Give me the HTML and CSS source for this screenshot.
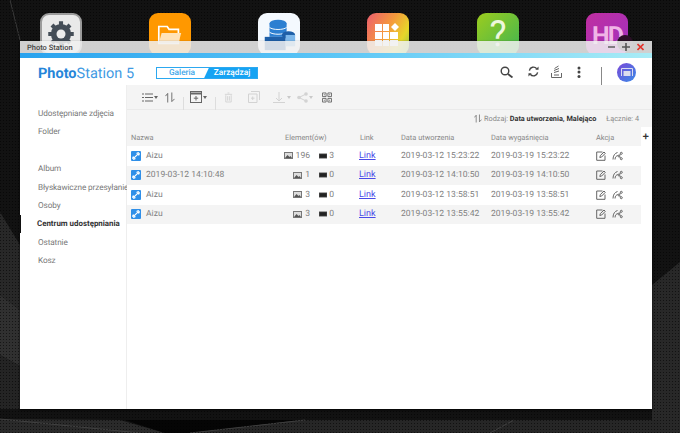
FILE: index.html
```html
<!DOCTYPE html>
<html lang="pl">
<head>
<meta charset="utf-8">
<title>Photo Station</title>
<link rel="stylesheet" href="styles.css">
</head>
<body>
<svg width="0" height="0" class="defs">
  <defs>
    <symbol id="i-link" viewBox="0 0 10 10"><rect width="10" height="10" rx="1" fill="#2f8fe8"/><path d="M2.800 7.200 7.200 2.800M2.500 5.500 1.700 7.200 2.800 8.300 4.500 7.500M5.500 2.500 7.200 1.700 8.300 2.800 7.500 4.500" stroke="#fff" stroke-width="1.200" fill="none"/></symbol>
    <symbol id="i-photo" viewBox="0 0 9 7"><rect width="9" height="7" fill="#777"/><rect x="1" y="1" width="7" height="5" fill="#ddd"/><path d="M1 6 3.500 3 5.500 5 6.500 4 8 6Z" fill="#555"/></symbol>
    <symbol id="i-film" viewBox="0 0 10 6"><rect width="10" height="6" fill="#444"/><rect x="1" y="1" width="8" height="4" fill="#222"/></symbol>
    <symbol id="i-edit" viewBox="0 0 10 10"><path d="M6.500 1H.7V9.300H9V4.500M3.800 6.500 4.300 4.600 8 1 9.300 2.300 5.700 6Z" fill="none" stroke="#666" stroke-width="1"/></symbol>
    <symbol id="i-share" viewBox="0 0 11 10"><g fill="none" stroke="#666" stroke-width="1"><path d="M1 8.500C1 4.500 3 2.200 5.500 1.500M3 8.500C3 6 4.500 4.800 5.800 4.500"/><circle cx="9.300" cy="2.300" r="1"/><circle cx="7" cy="5" r="1"/><circle cx="9.300" cy="7.700" r="1"/><path d="M8.500 3 7.600 4.200M7.600 5.800 8.500 7"/></g></symbol>
  </defs>
</svg>
<main class="desktop">
  <svg class="wallpaper" viewBox="0 0 680 433" width="680" height="433">
    <defs>
      <pattern id="dots" width="3" height="3" patternUnits="userSpaceOnUse"><rect width="1" height="1" fill="#000" opacity=".55"/></pattern>
    </defs>
    <rect width="680" height="433" fill="#121212"/>
    <path d="M0 212 20 245V310L0 295Z" fill="#282828"/>
    <path d="M0 295 20 310V366L0 355Z" fill="#303030"/>
    <path d="M0 355 20 366V409H0Z" fill="#242424"/>
    <path d="M652 285 680 262V433H652Z" fill="#282828"/>
    <path d="M0 419 120 420 165 433H0Z" fill="#2a2a2a"/>
    <path d="M125 420H300L190 433H165Z" fill="#050505"/>
    <path d="M300 420H660V433H190Z" fill="#262626"/>
    <path d="M0 419 140 433M190 433 305 420M490 433 514 420M10 0 20 40" stroke="#4a4a4a" stroke-width=".7" fill="none"/>
    <rect width="680" height="433" fill="url(#dots)"/>
  </svg>

  <div class="app-icon icon-gear"><svg viewBox="0 0 40 40" width="30" height="30"><circle cx="20" cy="20" r="10" fill="none" stroke="#444d57" stroke-width="7"/><path d="M20 3V37M3 20H37M8 8 32 32M32 8 8 32" stroke="#444d57" stroke-width="5.500"/><circle cx="20" cy="20" r="6" fill="#ededed"/></svg></div>
  <div class="app-icon icon-folder"><svg viewBox="0 0 30 30" width="28" height="28"><path d="M3 7H12L14 10H24V25H3Z" fill="none" stroke="#fff" stroke-width="1.800"/><path d="M6 14H27L24 25H3Z" fill="#ffe3b8"/></svg></div>
  <div class="app-icon icon-storage"><svg viewBox="0 0 40 40" width="38" height="38"><ellipse cx="19" cy="9" rx="9" ry="4" fill="#2c7fd1"/><rect x="10" y="9" width="18" height="14" fill="#2c7fd1"/><path d="M10 13C13 16 25 16 28 13M10 18C13 21 25 21 28 18" stroke="#fff" fill="none"/><ellipse cx="30" cy="21" rx="7" ry="4" fill="#1e5fa8"/><rect x="5" y="23" width="22" height="14" fill="#1e5fa8"/><rect x="27" y="21" width="10" height="12" fill="#7db7ea"/></svg></div>
  <div class="app-icon icon-apps"><svg viewBox="0 0 28 28" width="28" height="28"><g fill="#fff"><rect x="1" y="4" width="7" height="7"/><rect x="9" y="4" width="6" height="7"/><path d="M21 3 25 7 21 11 17 7Z"/><rect x="1" y="12" width="7" height="7"/><rect x="9" y="12" width="6" height="7"/><rect x="16" y="12" width="8" height="7"/><rect x="1" y="20" width="7" height="6"/><rect x="9" y="20" width="6" height="6"/><rect x="16" y="20" width="8" height="6"/></g></svg></div>
  <div class="app-icon icon-help"><span class="qmark">?</span></div>
  <div class="app-icon icon-hd"><span class="hd">HD</span></div>
  <div class="hd-badge"></div>

  <section class="window">
    <header class="titlebar">
      <span class="title">Photo Station</span>
      <div class="winbtns">
        <svg width="7" height="8" viewBox="0 0 7 8"><path d="M0 4H7" stroke="#666" stroke-width="1.600"/></svg>
        <svg width="8" height="8" viewBox="0 0 8 8"><path d="M0 4H8M4 0V8" stroke="#555" stroke-width="1.600"/></svg>
        <svg width="7" height="8" viewBox="0 0 7 8"><path d="M.5 1 6.500 7M6.500 1 .5 7" stroke="#e2332b" stroke-width="1.600"/></svg>
      </div>
    </header>
    <div class="accent"></div>
    <div class="appbar">
      <div class="brand"><b>Photo</b>Station 5</div>
      <div class="mode"><span class="mode-off">Galeria</span><span class="mode-on">Zarządzaj</span></div>
      <div class="appbar-tools">
        <svg class="tool t-search" width="13" height="12" viewBox="0 0 13 12"><circle cx="5" cy="5" r="3.800" fill="none" stroke="#444" stroke-width="1.400"/><path d="M8 8 12.500 11.500" stroke="#444" stroke-width="1.800"/></svg>
        <svg class="tool t-refresh" width="11" height="11" viewBox="0 0 12 12"><path d="M1.500 5A4.500 4.500 0 0 1 9.500 3M10.500 7A4.500 4.500 0 0 1 2.500 9" fill="none" stroke="#444" stroke-width="1.500"/><path d="M8 4H11.500V.5ZM4 8H.5V11.500Z" fill="#444"/></svg>
        <svg class="tool t-stack" width="11" height="13" viewBox="0 0 11 13"><path d="M.5 8V12.500H10.500V8M3 10H8M3 7.500 8 6M3 5.500 8 3.500M3.500 3.500 7.500 1" fill="none" stroke="#666"/></svg>
        <svg class="tool t-dots" width="4" height="12" viewBox="0 0 4 12"><circle cx="2" cy="2" r="1.500" fill="#444"/><circle cx="2" cy="6" r="1.500" fill="#444"/><circle cx="2" cy="10.500" r="1.500" fill="#444"/></svg>
        <span class="tool-sep"></span>
        <span class="avatar"><svg width="12" height="9" viewBox="0 0 12 9"><path d="M.5 8V.5H11.500V8" fill="none" stroke="#dde"/><rect x="2.500" y="3" width="7" height="5" fill="#dde"/></svg></span>
      </div>
    </div>
    <div class="body">
      <nav class="sidebar">
        <ul class="navgroup">
          <li>Udostępniane zdjęcia</li>
          <li>Folder</li>
        </ul>
        <ul class="navgroup">
          <li>Album</li>
          <li>Błyskawiczne przesyłanie</li>
          <li>Osoby</li>
          <li class="active">Centrum udostępniania</li>
          <li>Ostatnie</li>
          <li>Kosz</li>
        </ul>
      </nav>
      <div class="content">
        <div class="toolbar">
          <svg class="tb-list" width="11" height="9" viewBox="0 0 11 9"><path d="M0 1H2M0 4.500H2M0 8H2M3 1H11M3 4.500H11M3 8H11" stroke="#666"/></svg>
          <span class="caret"></span>
          <svg class="tb-sort" width="10" height="11" viewBox="0 0 11 11"><path d="M3 11V1L.5 4M7.500 0V10L10.500 7" fill="none" stroke="#666"/></svg>
          <span class="tb-sep"></span>
          <svg width="12" height="12" viewBox="0 0 12 12"><rect x=".5" y=".5" width="11" height="11" fill="none" stroke="#666"/><path d="M.5 2.500H11.500" stroke="#666" stroke-width="2"/><path d="M6 5V9.500M3.800 7.200H8.200" stroke="#666"/></svg>
          <span class="caret"></span>
          <span class="tb-sep sep2"></span>
          <svg class="dim" width="9" height="11" viewBox="0 0 10 11"><path d="M1 2H9M2 3V10.500H8V3M4 0.500H6M4 4V9M6 4V9" fill="none" stroke="#888"/></svg>
          <svg class="dim g-copy" width="12" height="12" viewBox="0 0 12 12"><path d="M3 .5H11.500V9M.5 3H9V11.500H.5ZM4.700 5.500V9M3 7.200H6.500" fill="none" stroke="#888"/></svg>
          <svg class="dim g-down" width="13" height="11" viewBox="0 0 13 11"><path d="M0 10.500H12M6 0V9M3 6 6 9 9 6" fill="none" stroke="#888"/></svg>
          <span class="caret dim"></span>
          <svg class="dim g-share" width="11" height="11" viewBox="0 0 11 11"><circle cx="2" cy="5.500" r="1.800" fill="#888"/><circle cx="9" cy="2" r="1.800" fill="#888"/><circle cx="9" cy="9" r="1.800" fill="#888"/><path d="M2 5.500 9 2M2 5.500 9 9" stroke="#888"/></svg>
          <span class="caret dim"></span>
          <svg class="g-qr" width="10" height="11" viewBox="0 0 11 11"><path d="M.5.5H4.500V4.500H.5ZM6.500.5H10.500V4.500H6.500ZM.5 6.500H4.500V10.500H.5ZM6.500 6.500H10.500V10.500H6.500Z" fill="none" stroke="#666"/><path d="M2 2H3V3H2ZM8 2H9V3H8ZM2 8H3V9H2ZM8 8H9V9H8Z" fill="#666"/></svg>
        </div>
        <div class="sortbar">
          <svg width="8" height="9" viewBox="0 0 11 11"><path d="M3 11V1L.5 4M7.500 0V10L10.500 7" fill="none" stroke="#666"/></svg>
          <span>Rodzaj: <b>Data utworzenia, Malejąco</b></span>
          <span class="total">Łącznie: 4</span>
        </div>
        <div class="tablewrap">
          <div class="row head">
            <span>Nazwa</span><span>Element(ów)</span><span>Link</span><span>Data utworzenia</span><span>Data wygaśnięcia</span><span>Akcja</span>
          </div>
          <div class="row">
            <span class="name"><svg width="10" height="10"><use href="#i-link"/></svg>Aizu</span>
            <span class="els"><span class="el-a"><svg width="9" height="7"><use href="#i-photo"/></svg>196</span><span class="el-b"><svg width="10" height="6"><use href="#i-film"/></svg>3</span></span>
            <a class="lnk" href="#">Link</a>
            <span>2019-03-12 15:23:22</span><span>2019-03-19 15:23:22</span>
            <span class="acts"><svg width="10" height="10"><use href="#i-edit"/></svg><svg width="11" height="10"><use href="#i-share"/></svg></span>
          </div>
          <div class="row alt">
            <span class="name"><svg width="10" height="10"><use href="#i-link"/></svg>2019-03-12 14:10:48</span>
            <span class="els"><span class="el-a"><svg width="9" height="7"><use href="#i-photo"/></svg>1</span><span class="el-b"><svg width="10" height="6"><use href="#i-film"/></svg>0</span></span>
            <a class="lnk" href="#">Link</a>
            <span>2019-03-12 14:10:50</span><span>2019-03-19 14:10:50</span>
            <span class="acts"><svg width="10" height="10"><use href="#i-edit"/></svg><svg width="11" height="10"><use href="#i-share"/></svg></span>
          </div>
          <div class="row">
            <span class="name"><svg width="10" height="10"><use href="#i-link"/></svg>Aizu</span>
            <span class="els"><span class="el-a"><svg width="9" height="7"><use href="#i-photo"/></svg>3</span><span class="el-b"><svg width="10" height="6"><use href="#i-film"/></svg>0</span></span>
            <a class="lnk" href="#">Link</a>
            <span>2019-03-12 13:58:51</span><span>2019-03-19 13:58:51</span>
            <span class="acts"><svg width="10" height="10"><use href="#i-edit"/></svg><svg width="11" height="10"><use href="#i-share"/></svg></span>
          </div>
          <div class="row alt">
            <span class="name"><svg width="10" height="10"><use href="#i-link"/></svg>Aizu</span>
            <span class="els"><span class="el-a"><svg width="9" height="7"><use href="#i-photo"/></svg>3</span><span class="el-b"><svg width="10" height="6"><use href="#i-film"/></svg>0</span></span>
            <a class="lnk" href="#">Link</a>
            <span>2019-03-12 13:55:42</span><span>2019-03-19 13:55:42</span>
            <span class="acts"><svg width="10" height="10"><use href="#i-edit"/></svg><svg width="11" height="10"><use href="#i-share"/></svg></span>
          </div>
          <span class="addcol">+</span>
        </div>
      </div>
    </div>
  </section>
</main>
</body>
</html>
```

FILE: styles.css
```css
* { box-sizing: border-box; }
html, body { margin: 0; padding: 0; }
body { font-family: Roboto, "Liberation Sans", sans-serif; color: #666; overflow: hidden; text-rendering: geometricPrecision; }
.defs { position: absolute; }
.desktop { position: relative; width: 680px; height: 433px; overflow: hidden; background: #121212; }
.wallpaper { position: absolute; left: 0; top: 0; }

.app-icon { position: absolute; top: 13px; width: 42px; height: 42px; border-radius: 9px; display: flex; align-items: center; justify-content: center; overflow: hidden; }
.icon-gear { left: 40px; background: #e9e9e9; border: 2px solid #9b9b9b; }
.icon-folder { left: 149px; background: #ff9800; }
.icon-storage { left: 258px; background: #f4f9fe; }
.icon-apps { left: 367px; background: linear-gradient(120deg, #ec5d6f 0%, #f59a3c 45%, #e6d62a 75%, #8bc34a 100%); }
.icon-help { left: 477px; background: linear-gradient(135deg, #9ccc1e, #3fb452); }
.icon-hd { left: 586px; background: linear-gradient(135deg, #c02fa0, #a030c0); }
.qmark { font: 400 36px/42px Roboto, sans-serif; color: #eef7dc; }
.hd { font: 700 25px/42px Roboto, sans-serif; color: #f0b4e6; letter-spacing: -2px; padding-top: 6px; }
.hd-badge { position: absolute; left: 617px; top: 35px; width: 16px; height: 16px; border-radius: 50%; background: #2a0f26; }

.window { position: absolute; left: 20px; top: 41px; width: 632px; height: 368px; display: flex; flex-direction: column; box-shadow: 0 1px 2px rgba(0,0,0,.8); }
.titlebar { height: 12px; flex: none; display: flex; align-items: center; justify-content: space-between; padding: 0 8px 0 7px; background: rgba(240,240,240,.86); }
.title { font-size: 7.500px; font-weight: 500; color: #444; }
.winbtns { display: flex; align-items: center; gap: 7px; }
.accent { height: 5px; flex: none; background: linear-gradient(90deg, #28a2ee 0%, #5cc6f6 50%, #a9ecf6 100%); }

.appbar { height: 27px; flex: none; display: flex; align-items: center; padding-left: 18px; background: #fff; }
.brand { font-size: 14.500px; color: #3f9ae3; width: 118px; line-height: 27px; margin-top: 3px; white-space: nowrap; }
.brand b { font-weight: 700; color: #2585d9; }
.mode { display: flex; margin-top: 3px; height: 12px; width: 102px; border: 1px solid #2ca8f0; font-size: 8.300px; line-height: 10px; text-align: center; background: linear-gradient(115deg, #fff 0 49%, #16a3f3 50%); }
.mode-off { flex: 1; color: #45a8ea; font-weight: 500; }
.mode-on { flex: 1; color: #fff; font-weight: 500; }
.appbar-tools { margin-left: auto; display: flex; align-items: center; height: 100%; }
.appbar-tools .tool { display: block; }
.t-search { margin-right: 15px; }
.t-refresh { margin-right: 12px; }
.t-stack { margin-right: 15px; }
.t-dots { margin-right: 20px; }
.tool-sep { width: 1px; height: 18px; background: #888; margin: 9px 15px 0 0; }
.avatar { width: 19px; height: 19px; margin: 2px 16px 0 0; border-radius: 50%; background: linear-gradient(135deg, #7a48d8, #3a8be8); display: flex; align-items: center; justify-content: center; }

.body { flex: 1; display: flex; min-height: 0; background: #fff; }
.sidebar { width: 107px; flex: none; border-right: 1px solid #eee; padding-top: 20px; }
.navgroup { list-style: none; margin: 0 0 18.300px; padding: 0; }
.navgroup li { height: 18.450px; line-height: 18.450px; padding-left: 18px; font-size: 8.200px; letter-spacing: -.1px; color: #777; white-space: nowrap; }
.navgroup li.active { position: relative; font-size: 7.900px; font-weight: 700; letter-spacing: 0; color: #333; padding-left: 17px; }
.navgroup li.active::before { content: ""; position: absolute; left: -1px; top: 0; width: 2px; height: 18px; background: #111; }
.content { flex: 1; min-width: 0; display: flex; flex-direction: column; }
.toolbar { height: 25px; flex: none; display: flex; align-items: center; padding-left: 15px; background: #f4f4f4; border-bottom: 1px solid #eaeaea; }
.caret { width: 0; height: 0; margin-left: 1px; border: 2px solid transparent; border-top: 3px solid #666; border-bottom: 0; }
.dim { opacity: .3; }
.tb-sort { margin-left: 7px; }
.tb-sep { width: 1px; height: 13px; background: #ddd; margin: 12px 6px 0 8px; }
.sep2 { margin: 12px 8px 0 8px; }
.g-copy { margin-left: 15px; }
.g-down { margin-left: 13px; }
.g-share { margin-left: 6px; }
.g-qr { margin-left: 9px; }
.sortbar { height: 17px; flex: none; display: flex; align-items: center; justify-content: flex-end; gap: 2px; padding-right: 13px; background: #f4f4f4; font-size: 7.300px; color: #888; }
.sortbar b { color: #333; font-weight: 700; }
.total { margin-left: 8px; }
.tablewrap { position: relative; flex: 1; padding-right: 11px; }
.row { display: grid; grid-template-columns: 154px 75px 41px 90px 105px 46px; align-items: center; height: 19.500px; padding: 0 0 .5px 4px; font-size: 8.550px; color: #808080; background: #fff; white-space: nowrap; }
.row.alt { background: #f4f4f4; }
.row.head { height: 19px; padding: 1px 0 0 4px; font-size: 7.400px; color: #888; background: #f4f4f4; }
.name { display: flex; align-items: center; gap: 5px; }
.els { display: flex; justify-content: flex-end; gap: 9px; padding-right: 26px; }
.el-a, .el-b { display: flex; align-items: center; gap: 3px; }
.el-b { width: 15px; gap: 2px; }
.lnk { color: #4a4ae8; text-decoration: underline; margin-left: -1px; font-size: 9px; }
.acts { display: flex; align-items: center; gap: 6px; }
.addcol { position: absolute; right: 3px; top: 3px; font: 700 11px/14px "Liberation Sans", sans-serif; color: #333; }
```
